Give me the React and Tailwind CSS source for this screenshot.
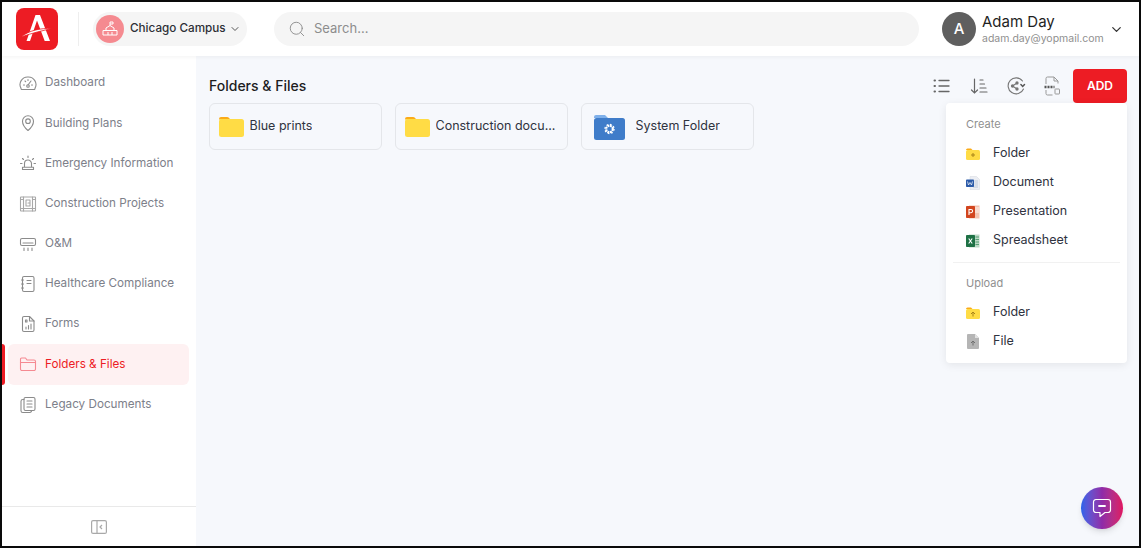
import { Search, ChevronDown } from "lucide-react";

const font = { fontFamily: "Inter, sans-serif" };

const iconProps = {
  width: 18,
  height: 18,
  viewBox: "0 0 18 18",
  fill: "none",
  stroke: "#8b8b8b",
  strokeWidth: 1.1,
  strokeLinecap: "round",
  strokeLinejoin: "round",
};

const Gauge = () => (
  <svg {...iconProps}>
    <path d="M3 15.500h12a1 1 0 0 0 1-1.200A7.600 7.600 0 0 0 9 3a7.600 7.600 0 0 0-7 11.300 1 1 0 0 0 1 1.200Z" />
    <path d="M9 11l3-4M4.500 11h1M12.500 11h1M6 7l.7.7M9 5.500v1" />
    <circle cx="9" cy="12" r="1.300" />
  </svg>
);
const Pin = () => (
  <svg {...iconProps}>
    <path d="M9 16.500s5.500-4.700 5.500-9.300a5.500 5.500 0 0 0-11 0c0 4.600 5.500 9.300 5.500 9.300Z" />
    <circle cx="9" cy="7.200" r="2.300" />
  </svg>
);
const Alarm = () => (
  <svg {...iconProps}>
    <path d="M5.500 13V9.500a3.500 3.500 0 0 1 7 0V13M3.500 13.200h11v2.300h-11z" />
    <path d="M9 2v1.500M3.500 4.500l1 1M14.500 4.500l-1 1M1.500 9.500h1.500M15 9.500h1.500" />
  </svg>
);
const Blueprint = () => (
  <svg {...iconProps} stroke="#a8a8a8">
    <rect x="1.500" y="2" width="15" height="14" rx="0.500" />
    <path d="M4.500 2v14M13.500 2v14M1.500 4.500h3M13.500 4.500h3M1.500 13.500h15M7 5h4v6H7zM9 8h2" />
  </svg>
);
const AirCon = () => (
  <svg {...iconProps}>
    <rect x="1.500" y="3.500" width="15" height="7" rx="1.500" />
    <path d="M4 8h10M5 13v2.500M9 13v2.500M13 13v2.500" />
  </svg>
);
const Notebook = () => (
  <svg {...iconProps}>
    <rect x="3.500" y="1.500" width="11.500" height="15" rx="1.500" />
    <path d="M2.500 5h2M2.500 9h2M2.500 13h2M8 5.500h4M8 8.500h4" />
  </svg>
);
const FormDoc = () => (
  <svg {...iconProps}>
    <path d="M5 1.500h5.500L15 6v9a1.500 1.500 0 0 1-1.500 1.500h-8.500A1.500 1.500 0 0 1 3.500 15V3A1.500 1.500 0 0 1 5 1.500Z" />
    <path d="M10.500 1.500V6H15M7 14v-2M9.500 14v-3.500M12 14V9M6.500 5h1.500v2H6.500z" />
  </svg>
);
const FolderOutline = () => (
  <svg {...iconProps} stroke="#f58a92">
    <path d="M1.500 14V4a1 1 0 0 1 1-1h4l1.500 2h7a1.500 1.500 0 0 1 1.500 1.500V14a1.500 1.500 0 0 1-1.500 1.500H3A1.500 1.500 0 0 1 1.500 14Z" />
    <path d="M1.500 7.500h15" />
  </svg>
);
const Pages = () => (
  <svg {...iconProps}>
    <rect x="5" y="1.500" width="11" height="13" rx="1.500" />
    <path d="M5 3.500H3.800A1.800 1.800 0 0 0 2 5.300v9.400a1.800 1.800 0 0 0 1.800 1.800h7a1.800 1.800 0 0 0 1.700-2M8 5h5M8 8h5M8 11h5" />
  </svg>
);

const navItems = [
  { label: "Dashboard", icon: Gauge },
  { label: "Building Plans", icon: Pin },
  { label: "Emergency Information", icon: Alarm },
  { label: "Construction Projects", icon: Blueprint },
  { label: "O&M", icon: AirCon },
  { label: "Healthcare Compliance", icon: Notebook },
  { label: "Forms", icon: FormDoc },
  { label: "Folders & Files", icon: FolderOutline, active: true },
  { label: "Legacy Documents", icon: Pages },
];

const YellowFolder = () => (
  <svg width="25" height="21" viewBox="0 0 25 21">
    <path d="M0 3a2 2 0 0 1 2-2h6c1.500 0 2.500 1 3 2.500H0z" fill="#fbab18" />
    <rect y="3" width="25" height="18" rx="2.500" fill="#ffdc45" />
  </svg>
);

const BlueFolder = () => (
  <svg width="31" height="26" viewBox="0 0 31 26">
    <path d="M0 3a2 2 0 0 1 2-2h9l3 3H0z" fill="#7fb0ea" />
    <rect y="4" width="31" height="22" rx="2.500" fill="#3f7cc9" />
    <circle cx="15.500" cy="15" r="3.300" fill="none" stroke="#fff" strokeWidth="2.200" strokeDasharray="2 0.600" />
    <circle cx="15.500" cy="15" r="4.600" fill="none" stroke="#fff" strokeWidth="1.200" strokeDasharray="1.700 1.900" />
  </svg>
);

const SmallFolder = ({ mark }) => (
  <svg width="14" height="12" viewBox="0 0 14 12">
    <path d="M0 2A1.500 1.500 0 0 1 1.500.5H5L6.500 2H0z" fill="#fbab18" />
    <rect y="2" width="14" height="10" rx="1.500" fill="#ffdc45" />
    {mark === "plus" ? (
      <path d="M7 5v4M5 7h4" stroke="#a8841a" strokeWidth="1" />
    ) : (
      <path d="M7 9.500V5M5 7l2-2 2 2" stroke="#a8841a" strokeWidth="1" fill="none" />
    )}
  </svg>
);

const WordIcon = () => (
  <svg width="14" height="14" viewBox="0 0 14 14">
    <path d="M4 .5h6.500l3 3v10H4z" fill="#eceef3" stroke="#d5d8df" strokeWidth="0.500" />
    <path d="M8.500 5H12M8.500 7H12M8.500 9H12M7 11h5" stroke="#b4bfd4" strokeWidth="0.800" />
    <rect y="3.500" width="8" height="7.500" rx="0.800" fill="#2b5aa8" />
    <path d="M1.500 5.500l1 3.500L4 6.500 5.500 9l1-3.500" stroke="#fff" strokeWidth="0.700" fill="none" />
  </svg>
);

const PowerPointIcon = () => (
  <svg width="14" height="14" viewBox="0 0 14 14">
    <path d="M3 .5h10.500v13H3z" fill="#f3c3b0" />
    <path d="M9 3h4M9 5h4M9 7h4" stroke="#fff" strokeWidth="0.800" />
    <rect y="1" width="9" height="12" rx="0.800" fill="#d2451e" />
    <path d="M3 10V4.500h2a1.500 1.500 0 0 1 0 3.200H3" stroke="#fff" strokeWidth="1.100" fill="none" />
  </svg>
);

const ExcelIcon = () => (
  <svg width="14" height="14" viewBox="0 0 14 14">
    <path d="M3 .5h10.500v13H3z" fill="#bcd9c6" />
    <path d="M9.500 3H13M9.500 5.500H13M9.500 8H13M9.500 10.500H13" stroke="#4d9a6c" strokeWidth="0.900" />
    <rect y="1" width="9" height="12" rx="0.800" fill="#1e7145" />
    <path d="M2.700 4.500l3.500 5M6.200 4.500l-3.500 5" stroke="#fff" strokeWidth="1.100" />
  </svg>
);

const FileUploadIcon = () => (
  <svg width="12" height="15" viewBox="0 0 12 15">
    <path d="M0 1a1 1 0 0 1 1-1h7l4 4v10a1 1 0 0 1-1 1H1a1 1 0 0 1-1-1z" fill="#b5b5b5" />
    <path d="M8 0v4h4z" fill="#e1e1e1" />
    <path d="M6 11.500V7M4 9l2-2 2 2" stroke="#6f6f6f" strokeWidth="1" fill="none" />
  </svg>
);

const FolderCard = ({ icon, label, gap = "gap-[6px]", pad = "pl-[8.500px]" }) => (
  <div className={`flex h-[47px] w-[172.500px] items-center ${gap} ${pad} rounded-md border border-[#e4e6ea] pr-2`}>
    {icon}
    <span className="min-w-0 truncate text-[12.500px] text-[#2f3340]">{label}</span>
  </div>
);

const MenuRow = ({ icon, label }) => (
  <div className="flex h-[29px] items-center">
    <span className="flex w-[27px] justify-start">{icon}</span>
    <span className="text-[12.500px] text-[#2f3340]">{label}</span>
  </div>
);

export default function App() {
  return (
    <div style={font} className="relative flex h-[548px] w-full flex-col overflow-hidden border-2 border-[#0a0a0a] bg-[#f6f8fc]">
      <header className="z-10 flex h-[54px] shrink-0 items-center bg-white pl-[14px] pr-[15px] shadow-[0_1px_4px_rgba(0,0,0,0.05)]">
        <div className="flex h-[42px] w-[42px] shrink-0 items-center justify-center rounded-lg bg-[#ed1c24]">
          <svg width="42" height="42" viewBox="0 0 42 42">
            <path d="M19.500 7h4.500L34 33h-5.300L21 12.500 14 33h-3.500Z" fill="#fff" />
            <path d="M5 29C13 22.500 24 20 36 20.500c-9 2-20 4.500-31 8.500Z" fill="#fff" stroke="#ed1c24" strokeWidth="0.800" />
          </svg>
        </div>
        <div className="ml-5 h-[34px] w-px shrink-0 bg-[#eeeeee]" />
        <div className="ml-[14px] flex h-[34px] w-[154px] shrink-0 items-center rounded-full bg-[#f5f5f5] pl-[3px]">
          <div className="flex h-[28px] w-[28px] shrink-0 items-center justify-center rounded-full bg-[#f58a90]">
            <svg width="18" height="18" viewBox="0 0 18 18" fill="none" stroke="#fff" strokeWidth="1">
              <path d="M2 15v-4.500h14V15zM5 10.500V8l4-2.500L13 8v2.500M9 5.500V2h3v2H9M7 15v-3M11 15v-3" />
            </svg>
          </div>
          <span className="ml-[6px] whitespace-nowrap text-[11.700px] font-medium text-[#2d2f36]">Chicago Campus</span>
          <ChevronDown className="ml-[3px] size-3 shrink-0 text-[#555]" />
        </div>
        <div className="ml-[27px] flex h-[34px] w-[645px] shrink-0 items-center rounded-full bg-[#f5f5f5] pl-[14px]">
          <Search className="size-[18px] text-[#8a8a8a]" strokeWidth={1.2} />
          <span className="ml-[8px] text-[13px] text-[#8d8d8d]">Search...</span>
        </div>
        <div className="ml-[23px] flex h-[34px] w-[34px] shrink-0 items-center justify-center rounded-full bg-[#5f5f5f] text-[15px] font-medium text-white">A</div>
        <div className="ml-[6px] flex flex-col">
          <span className="text-[15px] leading-[18px] text-[#1f1f1f]">Adam Day</span>
          <span className="text-[10.500px] leading-[15px] text-[#8f8f8f]">adam.day@yopmail.com</span>
        </div>
        <ChevronDown className="ml-auto size-[15px] shrink-0 text-[#333]" />
      </header>

      <div className="flex min-h-0 flex-1">
        <aside className="flex w-[194px] shrink-0 flex-col bg-white">
          <nav className="flex flex-1 flex-col pt-[7px]">
            {navItems.map(({ label, icon: Icon, active }) => (
              <div key={label} className="relative flex h-[40.200px] items-center pl-[6px] pr-[7px]">
                {active && <span className="absolute bottom-0 left-0 top-0 w-[3px] rounded-r-sm bg-[#ed1c24]" />}
                <div className={`flex h-full w-full items-center gap-[8px] rounded-md pl-[11px] ${active ? "bg-[#fef1f2] text-[#ed1c24]" : "text-[#7d808a]"}`}>
                  <Icon />
                  <span className="text-[11.700px]">{label}</span>
                </div>
              </div>
            ))}
          </nav>
          <div className="flex h-[40px] items-center justify-center border-t border-[#e9e9e9]">
            <svg width="16" height="14" viewBox="0 0 16 14" fill="none" stroke="#a9a9a9" strokeWidth="1.200">
              <rect x="0.600" y="0.600" width="14.800" height="12.800" rx="1.500" />
              <path d="M6 .6v12.800M11 5 9 7l2 2" />
            </svg>
          </div>
        </aside>

        <main className="relative flex-1 pl-[13px] pr-[12px]">
          <div className="flex h-[47px] items-center justify-between pt-[13px]">
            <h1 className="pb-[1px] text-[14px] font-medium text-[#1d1d1f]">Folders &amp; Files</h1>
            <div className="flex items-center">
              <div className="flex items-center gap-[17px] pr-[12px]">
                <svg width="20" height="20" viewBox="0 0 20 20" fill="none" stroke="#666" strokeWidth="1.300" strokeLinecap="round">
                  <path d="M7 4.500h10M7 10h10M7 15.500h10" />
                  <path d="M2.500 4.500h.5M2.500 10h.5M2.500 15.500h.5" strokeWidth="2" />
                </svg>
                <svg width="20" height="20" viewBox="0 0 20 20" fill="none" stroke="#666" strokeWidth="1.200" strokeLinecap="round">
                  <path d="M5.500 3v14M2.500 14l3 3 3-3M11 4h3M11 8h4.500M11 12h6M11 16h7" />
                </svg>
                <svg width="20" height="20" viewBox="0 0 20 20" fill="none" stroke="#777" strokeWidth="1.100" strokeLinecap="round">
                  <path d="M16.500 5A8 8 0 1 0 17.500 13" />
                  <path d="M18.500 8.500l-1.800 2-1.800-2" strokeWidth="1.500" stroke="#555" />
                  <circle cx="6.500" cy="10" r="1.100" fill="#555" />
                  <circle cx="11" cy="7" r="1.100" fill="#555" />
                  <circle cx="11" cy="13" r="1.100" fill="#555" />
                  <path d="M6.500 10l4.500-3M6.500 10l4.500 3" />
                </svg>
                <svg width="18" height="20" viewBox="0 0 18 20" fill="none" stroke="#999" strokeWidth="1">
                  <path d="M3 8V2.500A1.500 1.500 0 0 1 4.500 1H11l4 4v2.500M11 1v4h4M3 14v3.500A1.500 1.500 0 0 0 4.500 19h5" />
                  <path d="M1.500 11h10" stroke="#555" strokeWidth="2.500" strokeDasharray="2 1" />
                  <rect x="12" y="13" width="4.500" height="5" rx="0.500" />
                </svg>
              </div>
              <button className="h-[34px] w-[54px] rounded bg-[#ed1c24] text-[12px] font-semibold text-white">ADD</button>
            </div>
          </div>
          <div className="flex gap-[13.500px]">
            <FolderCard icon={<YellowFolder />} label="Blue prints" />
            <FolderCard icon={<YellowFolder />} label="Construction docu..." />
            <FolderCard icon={<BlueFolder />} label="System Folder" gap="gap-[11px]" pad="pl-[11.500px]" />
          </div>

          <div className="absolute right-[12px] top-[47px] w-[181px] rounded bg-white pb-[7px] pt-[13px] shadow-[0_2px_8px_rgba(0,0,0,0.08)]">
            <div className="px-5">
              <p className="mb-[7px] text-[11px] leading-[16px] text-[#8f8f8f]">Create</p>
              <MenuRow icon={<SmallFolder mark="plus" />} label="Folder" />
              <MenuRow icon={<WordIcon />} label="Document" />
              <MenuRow icon={<PowerPointIcon />} label="Presentation" />
              <MenuRow icon={<ExcelIcon />} label="Spreadsheet" />
            </div>
            <div className="mx-[7px] mb-[6px] mt-[7px] border-t border-[#f1f1f1]" />
            <div className="px-5 pt-[6px]">
              <p className="mb-[7px] text-[11px] leading-[16px] text-[#8f8f8f]">Upload</p>
              <MenuRow icon={<SmallFolder mark="up" />} label="Folder" />
              <MenuRow icon={<span className="pl-[1px]"><FileUploadIcon /></span>} label="File" />
            </div>
          </div>

          <button className="absolute bottom-[17px] right-[16px] flex h-[42px] w-[42px] items-center justify-center rounded-full bg-gradient-to-r from-[#2563eb] via-[#8f2aa8] to-[#e0115f] shadow-md">
            <svg width="22" height="22" viewBox="0 0 22 22" fill="none" stroke="#fff" strokeWidth="1.200" strokeLinejoin="round" strokeLinecap="round">
              <path d="M5 2.500h12A2.500 2.500 0 0 1 19.500 5v8a2.500 2.500 0 0 1-2.500 2.500h-3l-5 4v-4H5A2.500 2.500 0 0 1 2.500 13V5A2.500 2.500 0 0 1 5 2.500Z" />
              <path d="M8 9h6" strokeWidth="1.800" />
            </svg>
          </button>
        </main>
      </div>
    </div>
  );
}
